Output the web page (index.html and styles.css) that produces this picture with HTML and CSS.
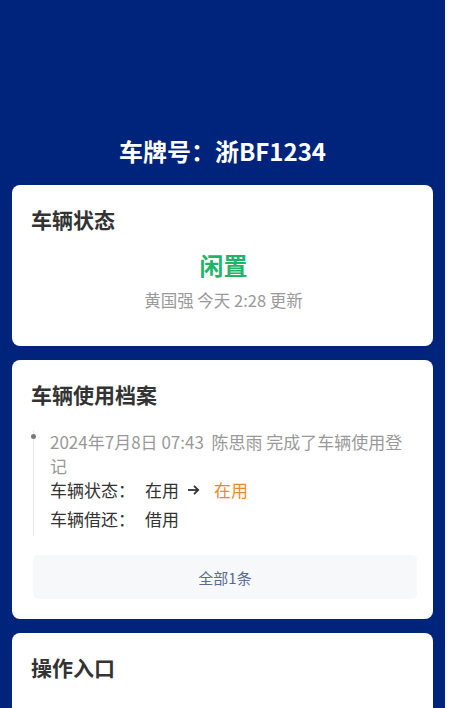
FILE: index.html
```html
<!DOCTYPE html>
<html lang="zh-CN">
<head>
<meta charset="utf-8">
<title>车辆详情</title>
<link rel="stylesheet" href="styles.css">
</head>
<body>
<div class="page">
  <header class="header">
    <h1 class="plate">车牌号：浙BF1234</h1>
  </header>

  <section class="card">
    <h2 class="card-title">车辆状态</h2>
    <div class="status">闲置</div>
    <div class="status-meta">黄国强 今天 2:28 更新</div>
  </section>

  <section class="card">
    <h2 class="card-title">车辆使用档案</h2>
    <div class="timeline">
      <div class="tl-item">
        <span class="tl-dot"></span>
        <p class="tl-head">2024年7月8日 07:43&nbsp; 陈思雨 完成了车辆使用登记</p>
        <div class="tl-row">
          <span class="tl-label">车辆状态：</span>
          <span class="tl-value">在用</span>
          <svg class="tl-arrow" width="13" height="12" viewBox="0 0 13 12" aria-hidden="true">
            <path d="M1 6 H11.2" stroke="#333" stroke-width="1.8" fill="none"/>
            <path d="M7 1.8 L11.2 6 L7 10.2" stroke="#333" stroke-width="1.8" fill="none" stroke-linejoin="miter"/>
          </svg>
          <span class="tl-value tl-new">在用</span>
        </div>
        <div class="tl-row">
          <span class="tl-label">车辆借还：</span>
          <span class="tl-value">借用</span>
        </div>
      </div>
    </div>
    <div class="all-btn">全部1条</div>
  </section>

  <section class="card card-last">
    <h2 class="card-title">操作入口</h2>
  </section>
</div>
</body>
</html>
```

FILE: styles.css
```css
html, body {
  margin: 0;
  padding: 0;
  background: #ffffff;
}

body {
  font-family: "Noto Sans CJK SC", "Noto Sans", sans-serif;
  color: #333333;
}

.page {
  width: 445px;
  min-height: 708px;
  background: #00237c;
  padding: 0 12px 20px;
  box-sizing: border-box;
  display: flex;
  flex-direction: column;
  gap: 14px;
}

.header {
  padding-top: 135px;
  padding-bottom: 4px;
}

.plate {
  margin: 0;
  font-size: 24px;
  line-height: 32px;
  font-weight: 700;
  color: #ffffff;
  text-align: center;
}

.card {
  background: #ffffff;
  border-radius: 8px;
  padding: 20px 17px 20px 19px;
}

.card-title {
  margin: 0;
  font-size: 21px;
  line-height: 29px;
  font-weight: 700;
  color: #333333;
}

.status {
  margin-top: 15px;
  text-align: center;
  font-size: 24px;
  line-height: 32px;
  font-weight: 700;
  color: #1db668;
}

.status-meta {
  margin-top: 8px;
  margin-bottom: 15px;
  text-align: center;
  font-size: 16.5px;
  line-height: 22px;
  color: #999999;
}

.timeline {
  margin-top: 21px;
  margin-left: 2px;
}

.tl-item {
  position: relative;
  border-left: 1px solid #e8e8e8;
  padding-left: 16px;
  padding-bottom: 4px;
}

.tl-dot {
  position: absolute;
  left: -3px;
  top: 4px;
  width: 5px;
  height: 5px;
  border-radius: 50%;
  background: #7a7a7a;
}

.tl-head {
  margin: 0;
  font-size: 17px;
  line-height: 24px;
  color: #999999;
}

.tl-row {
  display: flex;
  align-items: center;
  font-size: 17px;
  line-height: 26px;
  color: #333333;
  margin-top: 3px;
}

.tl-row:first-of-type {
  margin-top: -1px;
}

.tl-label {
  margin-right: 10px;
}

.tl-arrow {
  margin: 0 14px 0 8px;
}

.tl-new {
  color: #ee8a26;
}

.all-btn {
  margin: 19px -1px 0 2px;
  height: 44px;
  border-radius: 5px;
  background: #f7f8fa;
  display: flex;
  align-items: center;
  justify-content: center;
  font-size: 15px;
  color: #5a6a92;
}

.card-last {
  min-height: 120px;
}
```
